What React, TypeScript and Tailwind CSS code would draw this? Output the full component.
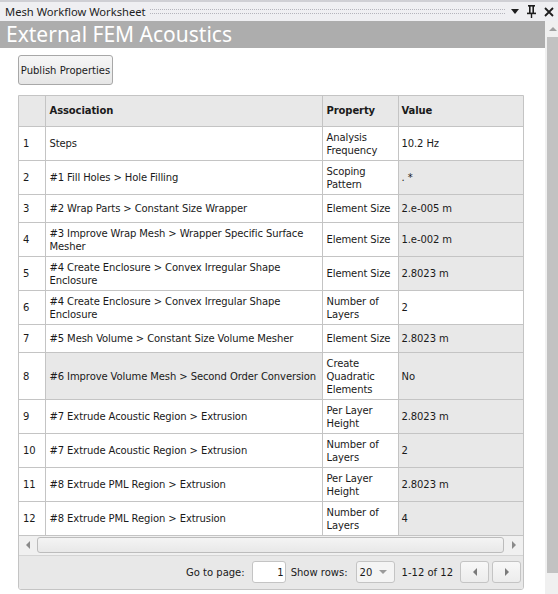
type Row = {
  n: number;
  a: string[];
  p: string[];
  v: string;
  valueWhite?: boolean;
  selected?: boolean;
};

const rows: Row[] = [
  { n: 1, a: ['Steps'], p: ['Analysis', 'Frequency'], v: '10.2 Hz', valueWhite: true },
  { n: 2, a: ['#1 Fill Holes > Hole Filling'], p: ['Scoping', 'Pattern'], v: '. *' },
  { n: 3, a: ['#2 Wrap Parts > Constant Size Wrapper'], p: ['Element Size'], v: '2.e-005 m' },
  { n: 4, a: ['#3 Improve Wrap Mesh > Wrapper Specific Surface', 'Mesher'], p: ['Element Size'], v: '1.e-002 m' },
  { n: 5, a: ['#4 Create Enclosure > Convex Irregular Shape', 'Enclosure'], p: ['Element Size'], v: '2.8023 m' },
  { n: 6, a: ['#4 Create Enclosure > Convex Irregular Shape', 'Enclosure'], p: ['Number of', 'Layers'], v: '2', valueWhite: true },
  { n: 7, a: ['#5 Mesh Volume > Constant Size Volume Mesher'], p: ['Element Size'], v: '2.8023 m' },
  { n: 8, a: ['#6 Improve Volume Mesh > Second Order Conversion'], p: ['Create', 'Quadratic', 'Elements'], v: 'No', selected: true },
  { n: 9, a: ['#7 Extrude Acoustic Region > Extrusion'], p: ['Per Layer', 'Height'], v: '2.8023 m' },
  { n: 10, a: ['#7 Extrude Acoustic Region > Extrusion'], p: ['Number of', 'Layers'], v: '2' },
  { n: 11, a: ['#8 Extrude PML Region > Extrusion'], p: ['Per Layer', 'Height'], v: '2.8023 m' },
  { n: 12, a: ['#8 Extrude PML Region > Extrusion'], p: ['Number of', 'Layers'], v: '4' },
];

const Lines = ({ lines }: { lines: string[] }) => (
  <>
    {lines.map((l, i) => (
      <div key={i} className="whitespace-nowrap">
        {l}
      </div>
    ))}
  </>
);

const Tri = ({ dir, color = '#8a8a8a' }: { dir: 'up' | 'down' | 'left' | 'right'; color?: string }) => {
  const pts = {
    up: '0,5 4,1 8,5',
    down: '0,1 8,1 4,5',
    left: '5,0 5,8 1,4',
    right: '1,0 1,8 5,4',
  }[dir];
  const vertical = dir === 'up' || dir === 'down';
  return (
    <svg width={vertical ? 8 : 6} height={vertical ? 6 : 8} viewBox={vertical ? '0 0 8 6' : '0 0 6 8'}>
      <polygon points={pts} fill={color} />
    </svg>
  );
};

const App = () => {
  return (
    <div className="w-[558px] h-[594px] bg-white overflow-hidden flex flex-col font-['DejaVu_Sans',sans-serif] text-[#1a1a1a]">
      {/* title bar */}
      <div className="h-[21px] shrink-0 bg-[#efeff2] border-t-2 border-[#cfcfd4] flex items-center pl-[5px] pr-[4px]">
        <span className="font-['Noto_Sans',sans-serif] text-[11.2px] leading-none text-[#1e1e1e] whitespace-nowrap">
          Mesh Workflow Worksheet
        </span>
        <div className="flex-1 ml-[4px] mr-[6px] h-[5px] border-y border-dotted border-[#b4b4bc]" />
        <div className="flex items-center gap-[8px]">
          <svg width="8" height="5" viewBox="0 0 8 5">
            <polygon points="0,0 8,0 4,5" fill="#1e1e1e" />
          </svg>
          <svg width="9" height="13" viewBox="0 0 9 13">
            <rect x="1" y="0" width="7" height="1.6" fill="#1e1e1e" />
            <rect x="2" y="1" width="1.6" height="7" fill="#1e1e1e" />
            <rect x="5.4" y="1" width="1.6" height="7" fill="#1e1e1e" />
            <rect x="0" y="7.6" width="9" height="1.6" fill="#1e1e1e" />
            <rect x="3.8" y="9" width="1.4" height="4" fill="#1e1e1e" />
          </svg>
          <svg width="10" height="10" viewBox="0 0 10 10">
            <path d="M1 1 L9 9 M9 1 L1 9" stroke="#1e1e1e" strokeWidth="1.8" />
          </svg>
        </div>
      </div>

      <div className="flex flex-1 min-h-0">
        {/* main */}
        <div className="w-[545px] flex flex-col">
          <div className="h-[27px] shrink-0 bg-[#adadad] flex items-center pl-[6px]">
            <span className="font-['Noto_Sans',sans-serif] text-[21px] leading-none text-white whitespace-nowrap">
              External FEM Acoustics
            </span>
          </div>

          <div className="pl-[18px] pt-[7px]">
            <button className="h-[30px] w-[95px] rounded-[3px] border border-[#a8a8a8] bg-gradient-to-b from-[#f6f6f6] to-[#e6e6e6] text-[10px] text-[#1a1a1a] whitespace-nowrap">
              Publish Properties
            </button>

            <div className="mt-[10px] w-[506px] border border-[#c4c4c4] rounded-b-[3px] overflow-hidden">
              <table className="w-full table-fixed border-collapse text-[10px] leading-[13px] tracking-[-0.1px]">
                <colgroup>
                  <col className="w-[26px]" />
                  <col className="w-[277px]" />
                  <col className="w-[76px]" />
                  <col />
                </colgroup>
                <thead>
                  <tr className="h-[30px] bg-[#e8e8e8] font-bold text-left">
                    <th className="border-r border-b border-[#c4c4c4]" />
                    <th className="border-r border-b border-[#c4c4c4] pl-[4px]">Association</th>
                    <th className="border-r border-b border-[#c4c4c4] pl-[4px]">Property</th>
                    <th className="border-b border-[#c4c4c4] pl-[3px]">Value</th>
                  </tr>
                </thead>
                <tbody>
                  {rows.map((r) => (
                    <tr key={r.n} className={r.p.length === 1 && r.a.length === 1 ? 'h-[28px]' : ''}>
                      <td className="border-r border-b border-[#c4c4c4] pl-[4px] pt-[4px] pb-[3px] align-middle bg-white">
                        {r.n}
                      </td>
                      <td
                        className={`border-r border-b border-[#c4c4c4] pl-[4px] pt-[4px] pb-[3px] align-middle overflow-hidden ${
                          r.selected ? 'bg-[#e8e8e8]' : 'bg-white'
                        }`}
                      >
                        <Lines lines={r.a} />
                      </td>
                      <td className="border-r border-b border-[#c4c4c4] pl-[4px] pt-[4px] pb-[3px] align-middle bg-white">
                        <Lines lines={r.p} />
                      </td>
                      <td
                        className={`border-b border-[#c4c4c4] pl-[3px] pt-[4px] pb-[3px] align-middle ${
                          r.valueWhite ? 'bg-white' : 'bg-[#e8e8e8]'
                        }`}
                      >
                        {r.v}
                      </td>
                    </tr>
                  ))}
                </tbody>
              </table>

              {/* horizontal scrollbar */}
              <div className="h-[19px] bg-[#f0f0f0] flex items-center">
                <div className="w-[18px] flex justify-center">
                  <Tri dir="left" />
                </div>
                <div className="flex-1 h-[16px] rounded-[3px] border border-[#bcbcbc] bg-gradient-to-b from-[#f4f4f4] to-[#e8e8e8]" />
                <div className="w-[19px] flex justify-center">
                  <Tri dir="right" />
                </div>
              </div>

              {/* pager */}
              <div className="h-[34px] bg-[#e8e8e8] border-t border-[#d4d4d4] flex items-center justify-end pr-[2px] text-[10px] text-[#1a1a1a] whitespace-nowrap">
                <span>Go to page:</span>
                <div className="ml-[7px] w-[34px] h-[22px] bg-white border border-[#c4c4c4] rounded-[3px] flex items-center justify-end pr-[1px]">
                  1
                </div>
                <span className="ml-[5px]">Show rows:</span>
                <div className="ml-[8px] w-[39px] h-[22px] bg-[#f4f4f4] border border-[#c4c4c4] rounded-[3px] flex items-center pl-[3px] gap-[7px]">
                  <span>20</span>
                  <Tri dir="down" color="#9a9a9a" />
                </div>
                <span className="ml-[7px]">1-12 of 12</span>
                <div className="ml-[7px] w-[29px] h-[22px] bg-gradient-to-b from-[#f8f8f8] to-[#ececec] border border-[#c4c4c4] rounded-[3px] flex items-center justify-center">
                  <Tri dir="left" color="#7a7a7a" />
                </div>
                <div className="ml-[3px] w-[29px] h-[22px] bg-gradient-to-b from-[#f8f8f8] to-[#ececec] border border-[#c4c4c4] rounded-[3px] flex items-center justify-center">
                  <Tri dir="right" color="#7a7a7a" />
                </div>
              </div>
            </div>
          </div>
        </div>

        {/* vertical scrollbar */}
        <div className="w-[13px] bg-[#f0f0f0] flex flex-col">
          <div className="h-[16px] flex items-center justify-center pl-[2px]">
            <Tri dir="up" color="#a0a0a0" />
          </div>
          <div className="ml-[2px] h-[536px] bg-[#c2c2c2]" />
        </div>
      </div>
    </div>
  );
};

export default App;
